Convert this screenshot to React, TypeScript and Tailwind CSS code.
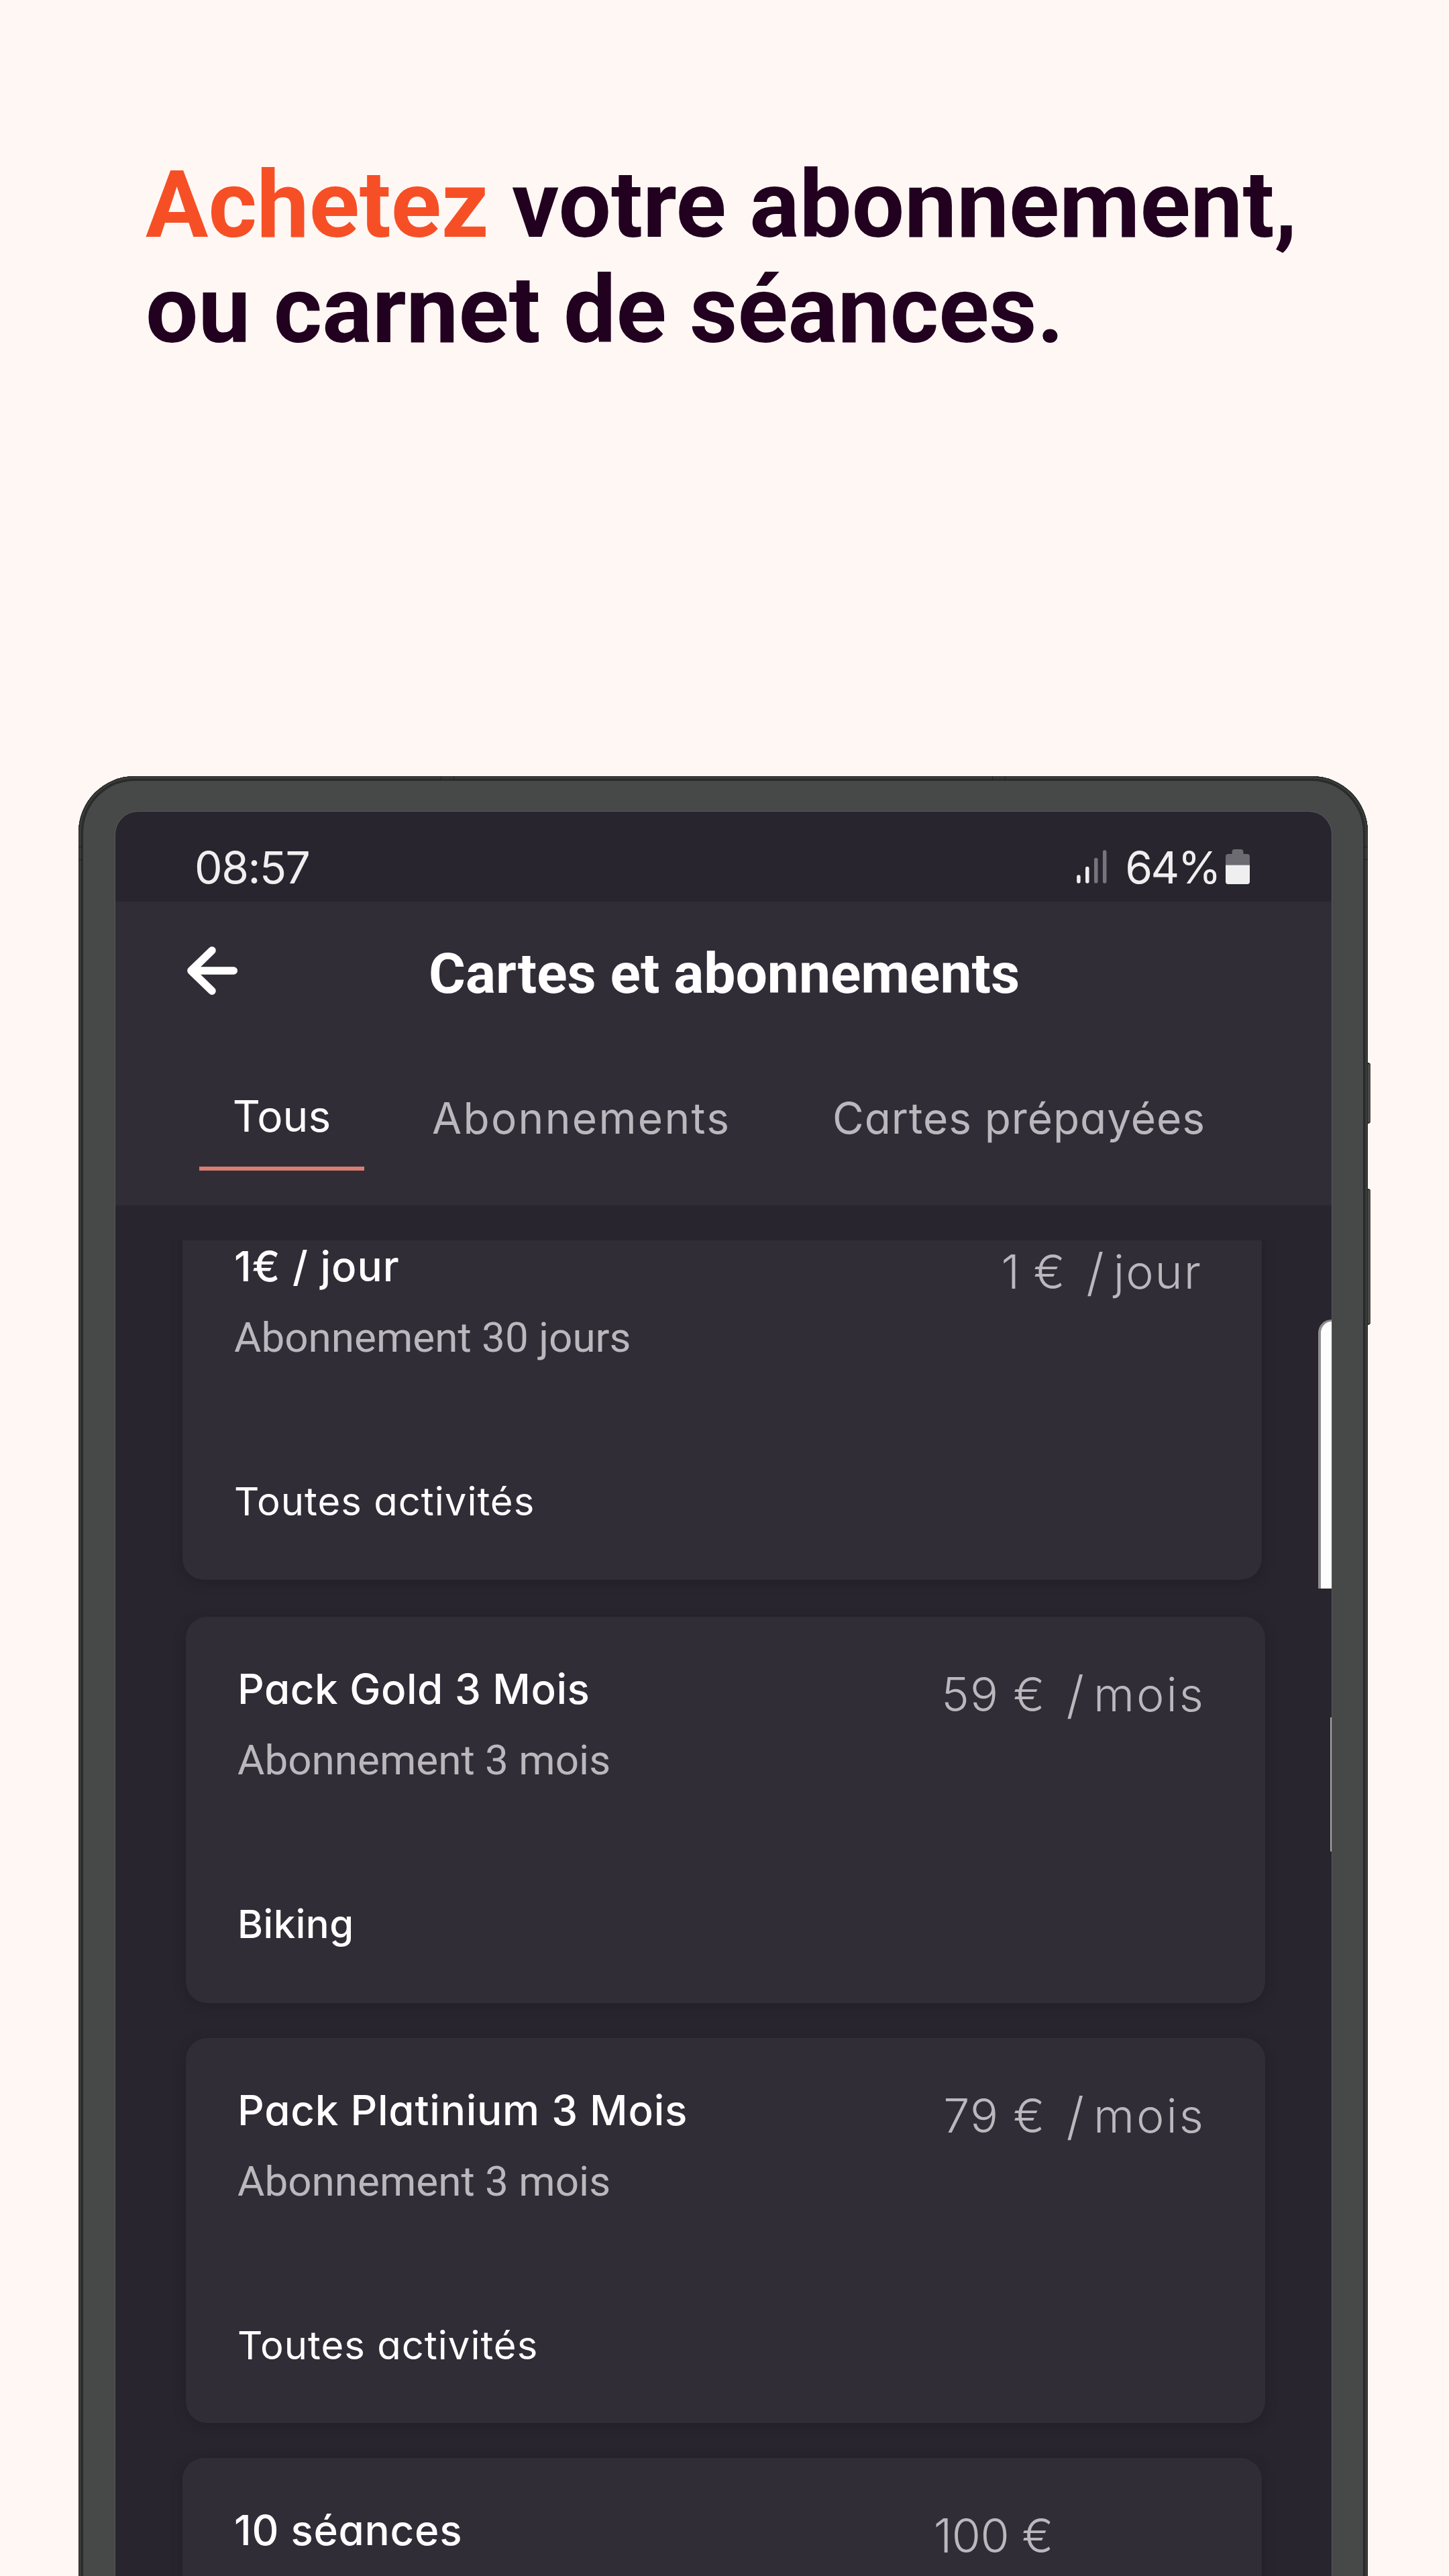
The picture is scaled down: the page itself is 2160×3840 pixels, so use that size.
import { useState } from 'react';

interface Plan {
  id: number;
  name: string;
  detail?: string;
  tag?: string;
  tagClass?: string;
  amount: string;
  period?: string;
  // spacing of the title glyphs, depends on the label
  nameClass: string;
  amountClass: string;
  periodClass?: string;
  cardClass: string;
}

const plans: Plan[] = [
  {
    id: 1,
    name: '1€ / jour',
    detail: 'Abonnement 30 jours',
    tag: 'Toutes activités',
    tagClass: 'font-normal tracking-[1px]',
    amount: '1 €',
    period: 'jour',
    nameClass: 'tracking-[1px]',
    amountClass: 'tracking-[0.5px]',
    periodClass: 'tracking-[2px]',
    cardClass: '-mt-[69px] ml-[100px] h-[575px]',
  },
  {
    id: 2,
    name: 'Pack Gold 3 Mois',
    detail: 'Abonnement 3 mois',
    tag: 'Biking',
    tagClass: 'font-medium tracking-[0.5px]',
    amount: '59 €',
    period: 'mois',
    nameClass: 'tracking-[0.5px]',
    amountClass: 'tracking-[1.2px]',
    periodClass: 'tracking-[3px]',
    cardClass: 'mt-[55px] ml-[105px] h-[576px]',
  },
  {
    id: 3,
    name: 'Pack Platinium 3 Mois',
    detail: 'Abonnement 3 mois',
    tag: 'Toutes activités',
    tagClass: 'font-normal tracking-[1px]',
    amount: '79 €',
    period: 'mois',
    nameClass: 'tracking-[0.75px]',
    amountClass: 'tracking-[1.2px]',
    periodClass: 'tracking-[3px]',
    cardClass: 'mt-[52px] ml-[105px] h-[574px]',
  },
  {
    id: 4,
    name: '10 séances',
    amount: '100 €',
    nameClass: 'tracking-[0.7px]',
    amountClass: 'mr-[222px] -tracking-[0.5px]',
    cardClass: 'mt-[52px] ml-[100px] h-[575px]',
  },
];

const tabs = [
  { key: 'all', label: 'Tous', className: 'w-[246px] text-center' },
  { key: 'subs', label: 'Abonnements', className: 'ml-[101px] w-[597px] text-left tracking-[2.3px]' },
  { key: 'cards', label: 'Cartes prépayées', className: 'text-left tracking-[0.9px]' },
];

function SignalIcon() {
  return (
    <svg width="45" height="52" viewBox="0 0 45 52" strokeWidth="5.5" strokeLinecap="round">
      <path d="M2.9 41v7M15.8 28.5v19.5" stroke="#efeff0" />
      <path d="M28.8 15.5v32.5M41.7 4v44" stroke="#77757c" />
    </svg>
  );
}

function BatteryIcon() {
  return (
    <svg width="36" height="52" viewBox="0 0 36 52">
      <path d="M9.5 7V4q0-4 4-4h9q4 0 4 4v3h5.5q4 0 4 4v12.5H0V11q0-4 4-4z" fill="#6d6b72" />
      <path d="M0 23.5h36V48q0 4-4 4H4q-4 0-4-4z" fill="#efeff0" />
    </svg>
  );
}

function BackArrow() {
  return (
    <svg
      width="75"
      height="72"
      viewBox="0 0 75 72"
      fill="none"
      stroke="white"
      strokeWidth="11.5"
      strokeLinecap="round"
      strokeLinejoin="round"
    >
      <path d="M37 5.8 5.9 36 37 66.2M7 36h62.3" />
    </svg>
  );
}

function PlanCard({ plan }: { plan: Plan }) {
  return (
    <article
      className={`w-[1609px] shrink-0 rounded-[32px] bg-[#312d37] pt-[68px] pr-[89px] pl-[77px] shadow-[0_4px_16px_rgba(30,26,32,0.6)] ${plan.cardClass}`}
    >
      <div className="flex items-start justify-between">
        <div>
          <h2 className={`text-[62px] leading-[80px] font-medium text-white ${plan.nameClass}`}>{plan.name}</h2>
          {plan.detail && (
            <p className="mt-[26px] font-[Roboto] text-[62px] leading-[80px] text-[#bab8bd]">{plan.detail}</p>
          )}
        </div>
        <div className="mt-2 flex text-[70px] leading-[80px] font-light text-[#bab8bd]">
          <span className={plan.amountClass}>{plan.amount}</span>
          {plan.period && (
            <>
              <span className="ml-[31px] text-[76px]">/</span>
              <span className={`ml-[14px] ${plan.periodClass}`}>{plan.period}</span>
            </>
          )}
        </div>
      </div>
      {plan.tag && <p className={`mt-[164px] text-[58px] leading-[80px] text-white ${plan.tagClass}`}>{plan.tag}</p>}
    </article>
  );
}

export default function App() {
  const [activeTab, setActiveTab] = useState('all');

  return (
    <div className="h-[3840px] w-[2160px] overflow-hidden bg-[#fff7f4]">
      <h1 className="pt-[227px] pl-[217px] font-[Roboto] text-[139px] leading-[157px] font-bold text-[#22001f]">
        <span className="text-[#f64f26]">Achetez</span> votre abonnement,
        <br />
        ou carnet de séances.
      </h1>

      {/* Phone */}
      <div className="relative mt-[616px] ml-[117px] h-[2900px] w-[1922px] rounded-t-[84px] bg-[#474948] pt-[53px] pl-[55px] shadow-[inset_0_0_0_1px_#272827,inset_0_0_0_4px_#3a3c3b,inset_0_0_0_5px_#1f201f,inset_0_0_0_6px_#363837,inset_0_0_0_7px_#222322]">
        {/* Side buttons */}
        <div className="absolute top-[427px] left-full h-[91px] w-1 rounded-r-sm border-y-2 border-[#222322] bg-[#4a4c4b]" />
        <div className="absolute top-[615px] left-full h-[203px] w-1 rounded-r-sm border-y-2 border-[#222322] bg-[#4a4c4b]" />
        {/* Antenna bands */}
        <div className="absolute top-[105px] left-0 h-5 w-1.5 border-y border-[#202120]" />
        <div className="absolute top-[105px] right-0 h-5 w-1.5 border-y border-[#202120]" />
        <div className="absolute top-0 left-[540px] h-1.5 w-5 border-x border-[#202120]" />
        <div className="absolute top-0 right-[540px] h-1.5 w-5 border-x border-[#202120]" />

        <div className="relative flex h-[2847px] w-[1813px] flex-col overflow-hidden rounded-t-[34px] bg-[#28252e] font-[Inter,sans-serif] shadow-[0_0_0_1px_#565857] [font-feature-settings:'cv11']">
          {/* Status bar */}
          <div className="flex h-[134px] shrink-0 items-start justify-between pt-[43px] pr-[122px] pl-[118px] text-[66px] leading-[80px] text-[#efeff0]">
            <span className="-tracking-[1.5px]">08:57</span>
            <div className="flex">
              <div className="mt-[13px] mr-[27px]">
                <SignalIcon />
              </div>
              <span className="mr-[9px] -tracking-[2.5px]">64%</span>
              <div className="mt-[13px]">
                <BatteryIcon />
              </div>
            </div>
          </div>

          {/* Header */}
          <header className="h-[453px] shrink-0 bg-[#312d37] pt-[58px]">
            <div className="flex items-start pl-[107px]">
              <button className="mt-[9px]">
                <BackArrow />
              </button>
              <div className="ml-[285px] font-[Roboto] text-[84px] leading-[100px] font-bold text-white">
                Cartes et abonnements
              </div>
            </div>
            <nav className="mt-[122px] flex items-start pl-[125px] text-[64px] leading-[80px]">
              {tabs.map((tab) => (
                <button
                  key={tab.key}
                  onClick={() => setActiveTab(tab.key)}
                  className={`whitespace-nowrap ${tab.className} ${
                    activeTab === tab.key
                      ? 'h-[121px] border-b-[6px] border-[#d97d72] pb-[35px] text-white'
                      : 'pt-[3px] text-[#bab8bd]'
                  }`}
                >
                  {tab.label}
                </button>
              ))}
            </nav>
          </header>

          {/* Plans */}
          <main className="mt-[52px] flex flex-1 flex-col overflow-hidden">
            {plans.map((plan) => (
              <PlanCard key={plan.id} plan={plan} />
            ))}
          </main>

          {/* Edge panel handle */}
          <div className="absolute top-[757px] right-0 h-[401px] w-5 rounded-tl-[20px] border-t-[3px] border-l-4 border-[#8f8d92] bg-[#fdfdfd]" />
          <div className="absolute top-[1350px] right-0 h-[200px] w-0.5 bg-[#a5a4a6]" />
        </div>
      </div>
    </div>
  );
}
